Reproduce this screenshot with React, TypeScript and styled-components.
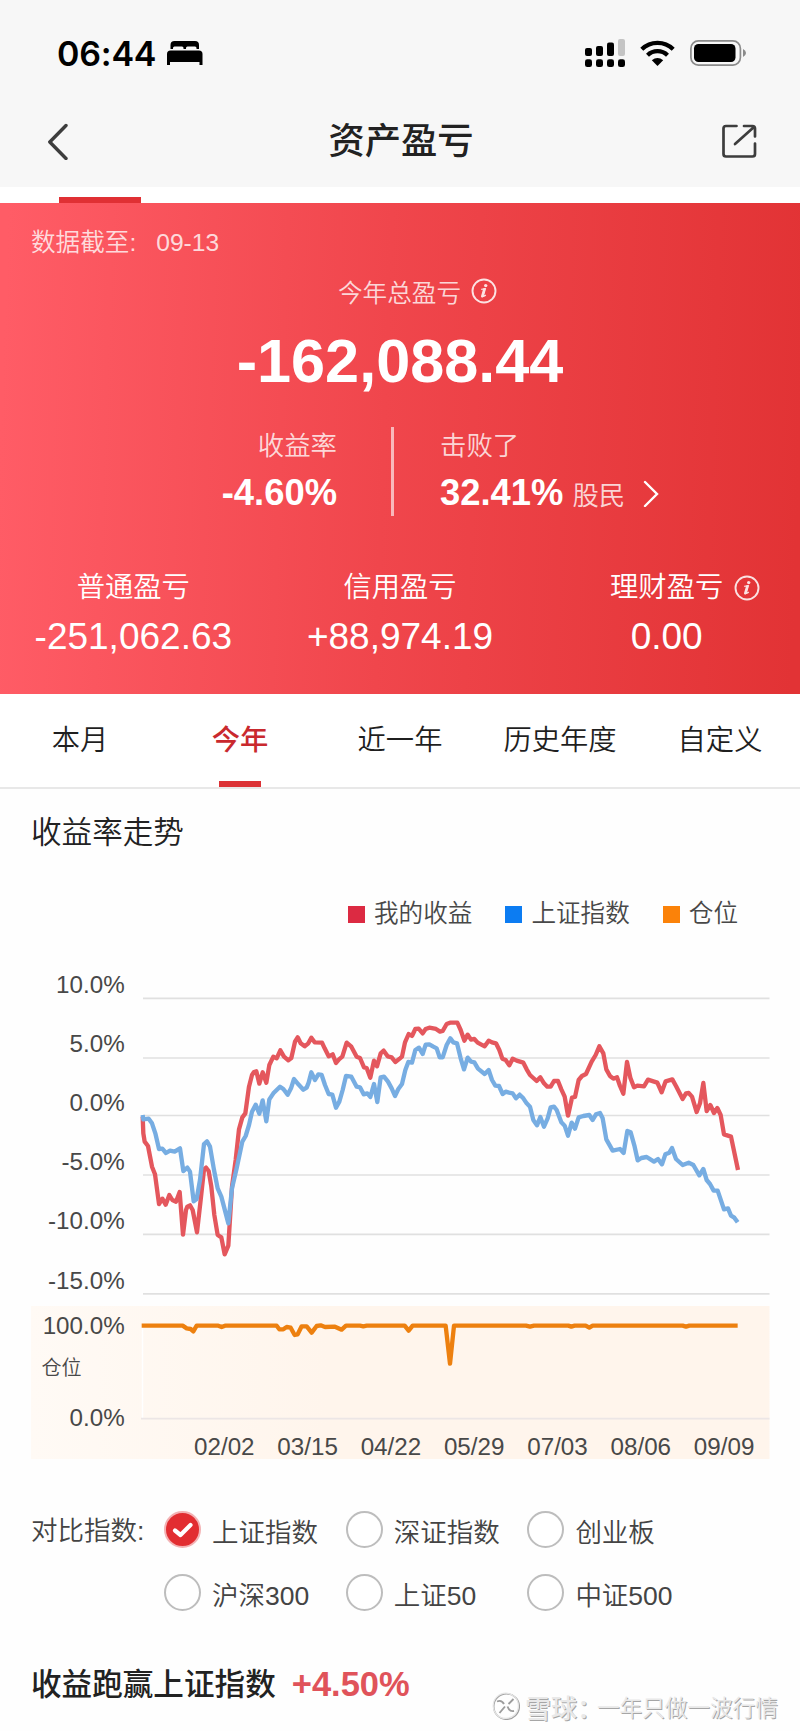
import React from 'react';
import styled, { createGlobalStyle } from 'styled-components';

const Global = createGlobalStyle`
  * { box-sizing: border-box; }
  body {
    margin: 0;
    background: #fefefe;
    font-family: "Liberation Sans", "Noto Sans CJK SC", sans-serif;
    color: #222;
  }
`;

const Page = styled.main`
  position: relative;
  width: 800px;
  height: 1731px;
  overflow: hidden;
`;

const Header = styled.header`
  height: 187px;
  background: #f7f7f7;
`;

const StatusBar = styled.div`
  display: flex;
  align-items: center;
  height: 94px;
  padding: 12px 54px 0 57px;
`;

const Clock = styled.span`
  width: 110px;
  padding-top: 1px;
  font: 600 34px/40px Inter, sans-serif;
  letter-spacing: -0.2px;
  color: #000;
`;

const StatusIcons = styled.div`
  display: flex;
  align-items: center;
  margin-left: auto;
`;

const NavBar = styled.nav`
  display: flex;
  align-items: center;
  justify-content: space-between;
  height: 93px;
  padding: 0 43px 0 45px;
`;

const Title = styled.h1`
  margin: 0;
  padding-top: 2px;
  font-size: 36.3px;
  font-weight: 500;
  line-height: 60px;
`;

const PrevTabs = styled.div`
  display: flex;
  align-items: flex-end;
  height: 16px;
  padding-left: 59px;
  background: #fff;
`;

const PrevIndicator = styled.div`
  width: 82px;
  height: 6px;
  background: #e03034;
`;

const Hero = styled.section`
  height: 491px;
  padding-top: 20px;
  color: #fff;
  background: linear-gradient(92deg, #ff5c66 1%, #f0464c 48%, #e23335 99%);
`;

const SoftText = styled.span<{ $size: number }>`
  font-size: ${p => p.$size}px;
  font-weight: 350;
  color: rgba(255, 255, 255, 0.8);
`;

const AsOf = styled.div`
  display: flex;
  gap: 20px;
  padding-left: 31px;
  line-height: 40px;
`;

const TotalLabel = styled.div`
  display: flex;
  align-items: center;
  gap: 10px;
  height: 56px;
  padding-left: 338px;
`;

const Total = styled.div`
  padding-top: 1px;
  font-size: 61.2px;
  font-weight: 700;
  line-height: 82px;
  text-align: center;
`;

const Stats = styled.div`
  display: flex;
  height: 94px;
  margin-top: 25px;
`;

const Divider = styled.div`
  width: 3px;
  height: 89px;
  background: rgba(255, 255, 255, 0.62);
`;

const Stat = styled.div<{ $side: 'left' | 'right' }>`
  display: flex;
  flex-direction: column;
  width: ${p => (p.$side === 'left' ? '391px' : '406px')};
  padding: ${p => (p.$side === 'left' ? '0 54px 0 0' : '0 0 0 46px')};
  align-items: ${p => (p.$side === 'left' ? 'flex-end' : 'flex-start')};
  line-height: 38px;
`;

const StatValue = styled.div`
  display: flex;
  align-items: center;
  height: 60px;
  font-size: 36.4px;
  font-weight: 700;
  line-height: 54px;
`;

const People = styled(SoftText)`
  margin: 5px 18px 0 9px;
  line-height: 44px;
`;

const Cells = styled.div`
  display: grid;
  grid-template-columns: repeat(3, 1fr);
  margin-top: 41px;
  text-align: center;
`;

const CellLabel = styled.div`
  font-size: 28.3px;
  font-weight: 350;
  line-height: 50px;
`;

const LabelWrap = styled.span`
  position: relative;
  display: inline-block;
`;

const InfoBadge = styled.span`
  position: absolute;
  left: 100%;
  top: 13px;
  margin-left: 11px;
  line-height: 0;
`;

const CellValue = styled.div`
  font-size: 37px;
  line-height: 49px;
`;

const Tabs = styled.div`
  display: grid;
  grid-template-columns: repeat(5, 1fr);
  height: 95px;
  background: #fff;
  border-bottom: 2px solid #e8e8e8;
`;

const Tab = styled.div<{ $active?: boolean }>`
  display: flex;
  flex-direction: column;
  align-items: center;
  justify-content: space-between;
  font-size: 28.3px;
  font-weight: ${p => (p.$active ? 500 : 350)};
  line-height: 93px;
  color: ${p => (p.$active ? '#c9292e' : '#1f1f1f')};
`;

const Underline = styled.div`
  width: 42px;
  height: 6px;
  margin-top: -6px;
  background: #dc3236;
`;

const SectionTitle = styled.h2`
  margin: 13px 0 0 31px;
  font-size: 30.6px;
  font-weight: 350;
  line-height: 60px;
`;

const Legend = styled.div`
  display: flex;
  justify-content: flex-end;
  gap: 33px;
  height: 40px;
  margin-top: 32px;
  padding-right: 62px;
`;

const LegendItem = styled.div`
  display: flex;
  align-items: center;
  gap: 9px;
  font-size: 24.6px;
  line-height: 40px;
  font-weight: 350;
  color: #484848;
`;

const Swatch = styled.span<{ $color: string }>`
  width: 17px;
  height: 17px;
  background: ${p => p.$color};
`;

const ChartBox = styled.svg`
  display: block;
  width: 800px;
  height: 510px;
  margin-top: 26px;
`;

const Compare = styled.section`
  display: flex;
  padding: 28px 0 0 31px;
  font-size: 26.5px;
  font-weight: 350;
  line-height: 63px;
  color: #444;
`;

const CompareLabel = styled.div`
  width: 133px;
  padding-top: 2px;
  white-space: nowrap;
`;

const Options = styled.div`
  display: grid;
  grid-template-columns: repeat(3, 181.7px);
`;

const Option = styled.label`
  display: flex;
  align-items: center;
  gap: 11px;
  height: 63px;
`;

const OptionText = styled.span`
  margin-top: 7px;
`;

const Radio = styled.span<{ $checked: boolean }>`
  display: flex;
  align-items: center;
  justify-content: center;
  width: 37px;
  height: 37px;
  border: 2px solid ${p => (p.$checked ? '#f3b2b4' : '#bdbdbd')};
  border-radius: 50%;
  background: ${p => (p.$checked ? '#e22d31' : '#fff')};
`;

const Summary = styled.div`
  display: flex;
  align-items: center;
  gap: 16px;
  margin: 30px 0 0 31px;
  font-size: 30.6px;
  font-weight: 500;
  line-height: 60px;
`;

const Gain = styled.span`
  font-size: 34.5px;
  font-weight: 700;
  color: #e0535a;
`;

const Watermark = styled.div`
  position: absolute;
  left: 492px;
  top: 1686px;
  display: flex;
  align-items: center;
  height: 40px;
  color: #e9e9e9;
  text-shadow: 1px 1px 0.5px #a6a6a6;
  white-space: nowrap;
`;

const Brand = styled.span`
  width: 72px;
  margin-left: 5px;
  font-size: 26px;
  font-weight: 500;
`;

const Author = styled.span`
  font-size: 22.6px;
  font-weight: 350;
`;

const Info = ({ opacity = 0.85 }: { opacity?: number }) => (
  <svg width="26" height="26" viewBox="0 0 26 26" fill="none" opacity={opacity}>
    <circle cx="13" cy="13" r="11.5" stroke="#fff" strokeWidth="1.9" />
    <circle cx="14.7" cy="7.6" r="1.7" fill="#fff" />
    <path d="M10.2 11.4 14.3 10.7 12.2 18.2Q12.1 19 14.8 16.9" stroke="#fff" strokeWidth="1.3" />
    <path d="M13.3 11.2 11.2 18.3" stroke="#fff" strokeWidth="2.4" strokeLinecap="round" />
  </svg>
);

// Plot coordinates are in thirds of a pixel, from the top left of the plot.
const MINE =
  '38,410 40,460 44,485 54,498 66,560 75,583 87,672 97,656 107,674 118,645 127,660 138,665 149,636 159,764 168,690 172,680 180,676 188,690 201,757 212,660 222,568 228,563 236,573 244,620 253,705 263,765 274,772 284,823 295,797 306,620 317,540 327,448 337,412 346,400 357,320 366,285 372,276 379,274 388,311 398,277 409,308 418,255 430,230 440,235 451,211 462,230 475,241 484,234 495,185 503,172 512,190 524,199 535,190 544,173 554,187 576,188 584,205 596,229 608,223 618,249 627,238 637,230 650,188 664,200 680,230 690,234 702,262 710,264 721,293 732,242 741,259 752,220 761,212 773,229 785,232 796,246 810,235 816,230 825,187 836,162 846,168 856,147 866,146 878,160 887,147 898,143 918,147 930,155 938,153 950,132 960,128 982,128 992,150 1003,182 1013,164 1023,179 1033,177 1043,188 1064,199 1076,182 1086,187 1098,190 1108,210 1117,236 1127,240 1138,256 1148,236 1160,242 1180,248 1190,268 1200,285 1220,303 1231,292 1242,310 1252,320 1262,320 1272,303 1284,303 1294,328 1304,350 1314,407 1326,353 1335,351 1346,300 1356,288 1368,282 1385,245 1397,225 1408,199 1420,220 1429,268 1440,288 1450,296 1461,292 1470,318 1480,341 1491,246 1501,293 1512,322 1522,317 1542,319 1554,299 1570,304 1582,308 1595,337 1607,304 1627,298 1638,318 1658,357 1668,340 1676,339 1686,350 1700,396 1710,370 1720,309 1730,393 1741,375 1752,399 1762,384 1772,405 1782,463 1803,470 1824,570';
const INDEX =
  '38,405 40,418 56,416 66,430 76,460 87,507 97,506 108,519 120,512 134,515 150,505 160,573 172,563 180,575 191,664 200,657 210,600 222,492 231,484 240,500 252,570 263,625 274,650 295,730 306,625 320,565 337,485 347,468 357,435 366,395 377,374 388,401 398,361 409,424 418,358 430,340 450,320 460,327 473,344 483,325 492,297 505,313 520,329 530,323 536,308 544,277 555,300 565,283 575,285 585,315 596,342 607,344 618,383 628,365 638,330 648,288 664,290 680,320 690,322 701,343 712,340 721,351 732,312 742,366 752,292 762,290 774,305 785,325 795,348 805,327 816,312 826,270 835,246 846,248 856,210 867,203 878,222 887,194 898,193 910,200 920,205 929,232 938,232 950,195 961,175 970,187 981,190 992,235 1002,268 1013,233 1023,245 1033,247 1044,266 1064,282 1076,270 1086,300 1096,317 1107,318 1118,342 1127,335 1137,338 1148,340 1158,355 1169,344 1180,355 1190,370 1200,380 1210,420 1221,436 1231,411 1242,440 1253,415 1262,382 1272,380 1280,390 1294,427 1304,437 1314,467 1325,428 1335,446 1346,412 1360,408 1378,405 1388,420 1398,403 1410,399 1418,415 1429,478 1448,512 1470,507 1481,519 1492,453 1502,457 1514,500 1523,541 1534,534 1550,531 1572,545 1584,537 1596,553 1606,523 1618,518 1626,504 1638,537 1658,555 1676,548 1690,555 1708,586 1720,567 1730,600 1740,612 1751,632 1763,632 1782,688 1794,685 1803,707 1813,713 1823,727';
const POSITION =
  '425,137 548,137 560,145 572,147 580,154 590,137 655,137 665,141 675,137 830,137 838,148 850,148 860,141 872,143 884,165 893,163 905,139 920,139 935,158 950,138 962,136 975,141 1005,140 1025,149 1038,137 1080,137 1090,139 1100,137 1214,137 1226,152 1238,137 1337,137 1350,251 1362,137 1578,137 1590,140 1602,137 1705,137 1714,140 1724,137 1757,137 1768,143 1778,137 2048,137 2058,140 2068,137 2213,137';

const RATES = ['10.0%', '5.0%', '0.0%', '-5.0%', '-10.0%', '-15.0%'];
const GRID = [998.3, 1058, 1115.5, 1175, 1234.3, 1293.8];
const DATES = ['02/02', '03/15', '04/22', '05/29', '07/03', '08/06', '09/09'];

const Chart = () => (
  <ChartBox viewBox="0 960 800 510" fontSize="24.2" fill="#484848">
    <defs>
      <linearGradient id="band" x1="0" x2="1" y1="0" y2="0">
        <stop offset="0" stopColor="#fffaf5" />
        <stop offset="0.4" stopColor="#fff5ec" />
        <stop offset="1" stopColor="#fff5ec" />
      </linearGradient>
    </defs>
    <rect x="31" y="1306" width="738.5" height="153" fill="url(#band)" />
    <path d="M142.5 1326V1418" stroke="#fff" strokeWidth="1.5" />
    {GRID.map(y => (
      <path key={y} d={`M143 ${y}H769.5`} stroke="#e0e0e0" strokeWidth="1.7" />
    ))}
    <path d="M141 1418.7H769.5" stroke="#ece6e6" strokeWidth="1.7" />
    <g fill="none" strokeWidth="13" strokeLinejoin="round">
      <g transform="translate(130 980) scale(0.33333)">
        <polyline points={MINE} stroke="#e4575d" />
        <polyline points={INDEX} stroke="#77ade2" />
      </g>
      <g transform="translate(0 1280) scale(0.33333)">
        <polyline points={POSITION} stroke="#ed800f" />
      </g>
    </g>
    {RATES.map((label, i) => (
      <text key={label} x="124.7" y={993 + i * 59.1} textAnchor="end">{label}</text>
    ))}
    <text x="124.7" y="1334" textAnchor="end">100.0%</text>
    <text x="41.5" y="1374.5" fontSize="20" fontWeight="350">仓位</text>
    <text x="124.7" y="1426" textAnchor="end">0.0%</text>
    {DATES.map((label, i) => (
      <text key={label} x={224.3 + i * 83.3} y="1454.7" textAnchor="middle">{label}</text>
    ))}
  </ChartBox>
);

const OPTIONS = ['上证指数', '深证指数', '创业板', '沪深300', '上证50', '中证500'];
const TABS = ['本月', '今年', '近一年', '历史年度', '自定义'];

export default function App() {
  return (
    <Page>
      <Global />
      <Header>
        <StatusBar>
          <Clock>06:44</Clock>
          <svg width="36" height="26" viewBox="0 0 36 26" fill="#000">
            <path d="M3.5 9V5Q3.5 1 7.5 1H28Q32 1 32 5V9H29.5V8Q29.5 6.5 28 6.5H20.5Q19 6.5 19 8V9H16.5V8Q16.5 6.5 15 6.5H7.5Q6 6.5 6 8V9Z" />
            <path d="M0 25V14Q0 10.500 3.500 10.500H32Q35.500 10.500 35.500 14V25H32.500V22H3V25Z" />
          </svg>
          <StatusIcons>
            <svg width="40" height="28" viewBox="0 0 40 28">
              <rect x="0" y="9" width="7" height="8" rx="2" />
              <rect x="11" y="7" width="7" height="10" rx="2" />
              <rect x="22" y="3.500" width="7" height="13.500" rx="2" />
              <rect x="33" y="0" width="7" height="17" rx="2" fill="#c4c4c4" />
              {[0, 11, 22, 33].map(x => (
                <rect key={x} x={x} y="20.300" width="7" height="7.700" rx="2.300" />
              ))}
            </svg>
            <svg width="35" height="26" viewBox="0 0 35 26" style={{ marginLeft: 15 }} fill="none" stroke="#000" strokeWidth="4.300">
              <path d="M1.800 9.200A22.500 22.500 0 0 1 33.200 9.200" />
              <path d="M7.500 15.200A14.500 14.500 0 0 1 27.500 15.200" />
              <path d="M11.800 20.300Q17.500 15.500 23.200 20.300L17.500 26Z" fill="#000" stroke="none" />
            </svg>
            <svg width="56" height="26" viewBox="0 0 56 26" style={{ marginLeft: 15 }}>
              <rect x="0.900" y="0.900" width="49.500" height="24.200" rx="7.500" fill="none" stroke="#8b8b8b" strokeWidth="1.700" />
              <rect x="4" y="4" width="41.500" height="18" rx="4.500" />
              <path d="M53 9Q56 10.500 56 13T53 17Z" fill="#8b8b8b" />
            </svg>
          </StatusIcons>
        </StatusBar>
        <NavBar>
          <svg width="36" height="38" viewBox="0 0 36 38" fill="none" stroke="#3d3d3d" strokeWidth="3.4" strokeLinecap="round" strokeLinejoin="round">
            <path d="M21 3.500 4.800 20 21 36.500" />
          </svg>
          <Title>资产盈亏</Title>
          <svg width="36" height="36" viewBox="0 0 36 36" fill="none" stroke="#3d3d3d" strokeWidth="2.700" strokeLinecap="round" strokeLinejoin="round">
            <path d="M15.500 3H5Q2.500 3 2.500 5.500V31Q2.500 33.500 5 33.500H31.500Q34 33.500 34 31V20.500" />
            <path d="M23 3H31.500Q34 3 34 5.500V13.500M33 4 14 21" />
          </svg>
        </NavBar>
      </Header>
      <PrevTabs>
        <PrevIndicator />
      </PrevTabs>
      <Hero>
        <AsOf>
          <SoftText $size={24.6}>数据截至:</SoftText>
          <SoftText $size={24.6}>09-13</SoftText>
        </AsOf>
        <TotalLabel>
          <SoftText $size={24.6}>今年总盈亏</SoftText>
          <Info />
        </TotalLabel>
        <Total>-162,088.44</Total>
        <Stats>
          <Stat $side="left">
            <SoftText $size={26.4}>收益率</SoftText>
            <StatValue>-4.60%</StatValue>
          </Stat>
          <Divider />
          <Stat $side="right">
            <SoftText $size={26.4}>击败了</SoftText>
            <StatValue>
              32.41%
              <People $size={26.4}>股民</People>
              <svg width="16" height="28" viewBox="0 0 16 28" fill="none" stroke="#fff" strokeWidth="2.400" strokeLinecap="round">
                <path d="M2 3 14 15 2 27" />
              </svg>
            </StatValue>
          </Stat>
        </Stats>
        <Cells>
          <div>
            <CellLabel>普通盈亏</CellLabel>
            <CellValue>-251,062.63</CellValue>
          </div>
          <div>
            <CellLabel>信用盈亏</CellLabel>
            <CellValue>+88,974.19</CellValue>
          </div>
          <div>
            <CellLabel>
              <LabelWrap>
                理财盈亏
                <InfoBadge><Info /></InfoBadge>
              </LabelWrap>
            </CellLabel>
            <CellValue>0.00</CellValue>
          </div>
        </Cells>
      </Hero>
      <Tabs>
        {TABS.map((name, i) => (
          <Tab key={name} $active={i === 1}>
            {name}
            {i === 1 && <Underline />}
          </Tab>
        ))}
      </Tabs>
      <SectionTitle>收益率走势</SectionTitle>
      <Legend>
        <LegendItem><Swatch $color="#dc2a42" />我的收益</LegendItem>
        <LegendItem><Swatch $color="#0c7cf2" />上证指数</LegendItem>
        <LegendItem><Swatch $color="#fb8209" />仓位</LegendItem>
      </Legend>
      <Chart />
      <Compare>
        <CompareLabel>对比指数:</CompareLabel>
        <Options>
          {OPTIONS.map((name, i) => (
            <Option key={name}>
              <Radio $checked={i === 0}>
                {i === 0 && (
                  <svg width="22" height="18" viewBox="0 0 22 18" fill="none" stroke="#fff" strokeWidth="4.200" strokeLinecap="round" strokeLinejoin="round">
                    <path d="M3 9.500 8.500 14 18.500 4" />
                  </svg>
                )}
              </Radio>
              <OptionText>{name}</OptionText>
            </Option>
          ))}
        </Options>
      </Compare>
      <Summary>
        收益跑赢上证指数
        <Gain>+4.50%</Gain>
      </Summary>
      <Watermark>
        <svg width="28" height="28" viewBox="0 0 28 28" fill="none">
          <circle cx="14.500" cy="14.500" r="12.800" stroke="#a0a0a0" strokeWidth="1.500" />
          <circle cx="13.800" cy="13.800" r="12.600" stroke="#e6e6e6" strokeWidth="1.200" />
          <path d="M5 9.500Q9.500 7.500 12 12M13 14.500 7.500 21M21.500 7 16.500 12M15.500 14.500Q17.500 20 22 19" stroke="#9c9c9c" strokeWidth="1.900" />
        </svg>
        <Brand>雪球：</Brand>
        <Author>一年只做一波行情</Author>
      </Watermark>
    </Page>
  );
}
